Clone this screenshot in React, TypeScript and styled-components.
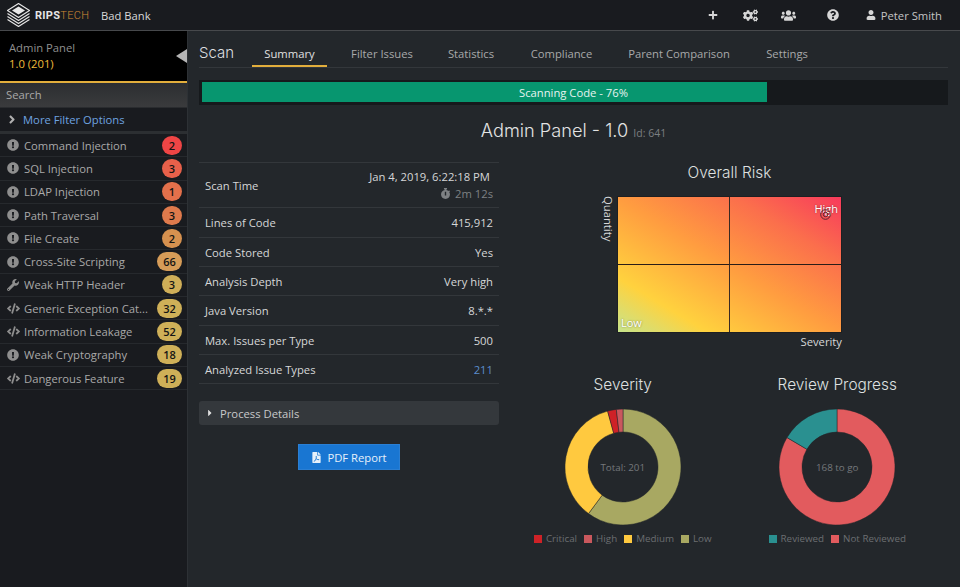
import React from "react";
import styled, { createGlobalStyle } from "styled-components";
import { FaExclamationCircle, FaWrench, FaCode, FaPlus, FaCogs, FaUsers, FaQuestionCircle, FaUser, FaStopwatch, FaFilePdf, FaCaretRight, FaAngleRight } from "react-icons/fa";

const Global = createGlobalStyle`
  html, body { margin: 0; padding: 0; background: #23272b; }
  body { width: 960px; height: 587px; overflow: hidden; font-family: "Open Sans", "Noto Sans", sans-serif; font-size: 11.25px; color: #d4d5d6; }
  * { box-sizing: border-box; }
`;

const Shell = styled.div`width: 960px; height: 587px; display: flex; flex-direction: column;`;
const Header = styled.header`
  height: 31px; flex: none; display: flex; align-items: center; background: #191b1f; border-bottom: 1px solid #47494c; padding: 0 18px 0 6px;
`;
const Brand = styled.div`display: flex; align-items: center; width: 95px; flex: none;`;
const BrandText = styled.span`font-family: "Roboto", sans-serif; font-size: 11px; font-weight: 700; color: #e6e6e6; margin-left: 4px; letter-spacing: .3px;`;
const BrandAccent = styled.span`font-weight: 300; color: #d28a35;`;
const Company = styled.span`font-size: 11.25px; color: #d8d8d8;`;
const HeaderIcons = styled.div`margin-left: auto; display: flex; align-items: center; color: #d6d6d6;`;
const HeaderBtn = styled.span<{ $mr: number }>`display: inline-flex; align-items: center; margin-right: ${p => p.$mr}px;`;
const UserName = styled.span`font-size: 11.25px; color: #c4c4c4; margin-left: 5px;`;

const Body = styled.div`flex: 1; display: flex; min-height: 0;`;
const Sidebar = styled.aside`width: 188px; flex: none; background: #191b1f; border-right: 1px solid #2d3135; display: flex; flex-direction: column;`;
const ProjectBox = styled.div`height: 52px; background: #000; border-bottom: 2px solid #e2ae3c; padding: 9px 9px 0; position: relative; line-height: 16px; flex: none;`;
const ProjectName = styled.div`color: #8f8f8f;`;
const ProjectVer = styled.div`color: #f0bb3a;`;
const Collapse = styled.span`position: absolute; right: 0; top: 18px; width: 0; height: 0; border-style: solid; border-width: 7px 11px 7px 0; border-color: transparent #b5b5b5 transparent transparent;`;
const SearchBar = styled.div`height: 25px; flex: none; background: linear-gradient(#2c2e31, #3a3b3d); padding: 0 0 2px 6px; display: flex; align-items: center; color: #a9a9a9; border-bottom: 1px solid #2a2c2f;`;
const MoreRow = styled.div`height: 26px; flex: none; display: flex; align-items: center; padding-left: 8px; gap: 7px; color: #6fa3e0; border-bottom: 3px solid #2c2f32;`;
const MoreIcon = styled.span`color: #b0b0b0; display: flex; font-size: 13px; width: 8px; justify-content: center;`;
const IssueList = styled.div`display: flex; flex-direction: column;`;
const IssueRow = styled.div`height: 23.3px; flex: none; display: flex; align-items: center; border-bottom: 1px solid #26292d; padding: 0 5px 0 7px; color: #a9a9a9;`;
const IssueIcon = styled.span`width: 17px; flex: none; display: flex; color: #8e8e8e; font-size: 12px;`;
const IssueName = styled.span`flex: 1; white-space: nowrap; overflow: hidden;`;
const Badge = styled.span<{ $c: string; $w: number }>`
  height: 19px; width: ${p => p.$w}px; border-radius: 10px; background: ${p => p.$c}; color: #141414; flex: none;
  display: flex; align-items: center; justify-content: center; font-size: 11px; font-weight: 600;
`;

const Main = styled.main`flex: 1; padding: 0 12px 0 11px; min-width: 0; background: #23272b;`;
const TabsBar = styled.nav`height: 37px; display: flex; align-items: stretch; border-bottom: 1px solid #33373b;`;
const ScanTitle = styled.div`font-family: "Inter", sans-serif; font-size: 15px; color: #dedfe0; width: 53px; padding-top: 12px; font-weight: 300;`;
const Tab = styled.div<{ $active?: boolean; $w: number }>`
  width: ${p => p.$w}px; text-align: center; padding-top: 15px; color: ${p => (p.$active ? "#e0e0e0" : "#a8a9aa")};
  border-bottom: 2px solid ${p => (p.$active ? "#e2ae3c" : "transparent")}; white-space: nowrap;
`;
const ProgressTrack = styled.div`margin-top: 12px; height: 25px; background: #16191c; padding: 2px 3px 3px; position: relative;`;
const ProgressFill = styled.div`height: 20px; background: #07966f;`;
const ProgressLabel = styled.span`position: absolute; inset: 0; display: flex; align-items: center; justify-content: center; color: #e6f3ef; padding-bottom: 1px;`;
const Title = styled.h1`margin: 15px 0 0; height: 24px; text-align: center; font-family: "Inter", sans-serif; font-weight: 300; font-size: 18.2px; line-height: 20px; color: #e2e3e3;`;
const TitleId = styled.small`font-family: "Open Sans", sans-serif; font-size: 10.5px; color: #7c7f82; font-weight: 400;`;
const Columns = styled.div`display: flex; margin-top: 14px;`;
const LeftCol = styled.div`width: 300px; flex: none; margin-top: 4px;`;
const RightCol = styled.div`flex: 1; display: flex; flex-direction: column; align-items: center; padding: 5px 0 0 13px;`;
const InfoRow = styled.div<{ $h: number }>`height: ${p => p.$h}px; display: flex; align-items: center; justify-content: space-between; padding: 0 6px; border-top: 1px solid #33373b; color: #d6d7d8;`;
const InfoLast = styled.div`border-top: 1px solid #33373b;`;
const ValueStack = styled.div`display: flex; flex-direction: column; align-items: flex-end; line-height: 17px;`;
const DateText = styled.span`margin-right: 3px;`;
const Duration = styled.div`color: #7e8184; display: flex; align-items: center; gap: 4px;`;
const LinkVal = styled.span`color: #5b8dcd;`;
const Accordion = styled.div`margin-top: 17px; height: 24px; background: #34383c; border-radius: 3px; display: flex; align-items: center; padding-left: 6px; color: #c8c9ca; gap: 5px;`;
const CaretBox = styled.span`display: flex; font-size: 10px; color: #e0e0e0;`;
const ButtonRow = styled.div`display: flex; justify-content: center; margin-top: 19px;`;
const PdfButton = styled.button`width: 102px; height: 26px; border: 1px solid #2a7fd4; background: #1976d2; color: #e6f0fa; font-family: inherit; font-size: 11.25px; display: flex; align-items: center; justify-content: center; gap: 5px; padding: 0;`;

const ChartTitle = styled.h2`margin: 0; font-family: "Inter", sans-serif; font-weight: 300; font-size: 15.4px; line-height: 20px; color: #dfe0e0; text-align: center;`;
const RiskWrap = styled.div`display: flex; flex-direction: column; align-items: center; margin: 0 1px 25px 0;`;
const RiskRow = styled.div`display: flex; margin-top: 13px; position: relative;`;
const RiskMap = styled.div`
  width: 225px; height: 137px; position: relative; border: 1px solid #1d1f22;
  background: linear-gradient(to top right, #c6e48c 0%, #ffd23e 20%, #ff9c40 50%, #fb6f4c 76%, #f83a5c 100%);
  display: grid; grid-template-columns: 1fr 1fr; grid-template-rows: 1fr 1fr;
`;
const Quad = styled.div<{ $r?: boolean; $b?: boolean }>`
  border-right: ${p => (p.$r ? "1px solid #3a2a22" : "none")}; border-bottom: ${p => (p.$b ? "1px solid #2a1d18" : "none")};
`;
const QuantityLabel = styled.span`position: absolute; left: -16px; top: 0; writing-mode: vertical-rl; color: #d6d7d8; line-height: 14px;`;
const MapLabel = styled.span<{ $high?: boolean }>`position: absolute; font-size: 11px; color: #fff; text-shadow: 0 0 2px rgba(0,0,0,.45); ${p => (p.$high ? "right: 3px; top: 4px;" : "left: 3px; bottom: 2px;")}`;
const Target = styled.svg`position: absolute; right: 10px; top: 12px;`;
const SeverityLabel = styled.div`font-size: 11.25px; color: #d6d7d8; line-height: 16px; margin-top: 1px; width: 225px; text-align: right;`;
const DonutRow = styled.div`display: flex; width: 429px; justify-content: space-between;`;
const DonutCard = styled.div`width: 214.5px; display: flex; flex-direction: column; align-items: center;`;
const DonutBox = styled.div`width: 118px; height: 118px; position: relative; margin-top: 13px;`;
const DonutLabel = styled.div`position: absolute; inset: 0; display: flex; align-items: center; justify-content: center; font-size: 9.8px; color: #75787b;`;
const Legend = styled.div`display: flex; gap: 7px; margin-top: 6px; font-size: 9.8px; color: #6b6e71; line-height: 14px;`;
const LegendItem = styled.span`display: flex; align-items: center; gap: 4px;`;
const Swatch = styled.i<{ $c: string }>`display: block; width: 8px; height: 8px; background: ${p => p.$c};`;

const issues: [string, string, number, string, "warn" | "wrench" | "code"][] = [
  ["Command Injection", "2", 20, "#ef4545", "warn"],
  ["SQL Injection", "3", 20, "#e8604a", "warn"],
  ["LDAP Injection", "1", 20, "#e3704b", "warn"],
  ["Path Traversal", "3", 20, "#df7a4c", "warn"],
  ["File Create", "2", 20, "#d6914f", "warn"],
  ["Cross-Site Scripting", "66", 25, "#d69c58", "warn"],
  ["Weak HTTP Header", "3", 20, "#cfae58", "wrench"],
  ["Generic Exception Cat...", "32", 25, "#cfb058", "code"],
  ["Information Leakage", "52", 25, "#cfb058", "code"],
  ["Weak Cryptography", "18", 25, "#cfb058", "warn"],
  ["Dangerous Feature", "19", 25, "#cfb058", "code"],
];

const Logo = () => (
  <svg width="25" height="26" viewBox="0 0 25 26" fill="none" stroke="#e8e8e8" strokeWidth="1.1" strokeLinejoin="round">
    <path d="M12.5 1.5 23.5 8.5 12.5 15.5 1.5 8.5Z" />
    <path d="M12.5 4.5 19 8.5 12.5 12.5 6 8.5Z" fill="#e8e8e8" stroke="none" />
    <path d="M1.5 11.5 12.5 18.5 23.5 11.5" />
    <path d="M1.5 14.5 12.5 21.5 23.5 14.5" />
    <path d="M1.5 17.5 12.5 24.5 23.5 17.5" />
  </svg>
);

const polar = (cx: number, cy: number, r: number, deg: number) => {
  const a = ((deg - 90) * Math.PI) / 180;
  return [cx + r * Math.cos(a), cy + r * Math.sin(a)];
};
const arc = (from: number, to: number) => {
  const R = 58, r = 35, c = 59;
  const [x1, y1] = polar(c, c, R, from), [x2, y2] = polar(c, c, R, to), [x3, y3] = polar(c, c, r, to), [x4, y4] = polar(c, c, r, from);
  const large = to - from > 180 ? 1 : 0;
  return `M${x1} ${y1}A${R} ${R} 0 ${large} 1 ${x2} ${y2}L${x3} ${y3}A${r} ${r} 0 ${large} 0 ${x4} ${y4}Z`;
};
const Donut = ({ segs, label }: { segs: [number, number, string][]; label: string }) => (
  <DonutBox>
    <svg width="118" height="118" viewBox="0 0 118 118">
      {segs.map(([a, b, c]) => <path key={a} d={arc(a, b)} fill={c} stroke="#23272b" strokeWidth=".5" />)}
    </svg>
    <DonutLabel>{label}</DonutLabel>
  </DonutBox>
);

const rows: [string, string, number][] = [
  ["Lines of Code", "415,912", 30],
  ["Code Stored", "Yes", 29],
  ["Analysis Depth", "Very high", 29],
  ["Java Version", "8.*.*", 30],
  ["Max. Issues per Type", "500", 29],
];
const tabs: [string, number][] = [["Filter Issues", 110], ["Statistics", 68], ["Compliance", 113], ["Parent Comparison", 122], ["Settings", 94]];

export default function App() {
  return (
    <Shell>
      <Global />
      <Header>
        <Brand><Logo /><BrandText>RIPS<BrandAccent>TECH</BrandAccent></BrandText></Brand>
        <Company>Bad Bank</Company>
        <HeaderIcons>
          <HeaderBtn $mr={25}><FaPlus size={10} /></HeaderBtn>
          <HeaderBtn $mr={23}><FaCogs size={15} /></HeaderBtn>
          <HeaderBtn $mr={31}><FaUsers size={15} /></HeaderBtn>
          <HeaderBtn $mr={27}><FaQuestionCircle size={12} /></HeaderBtn>
          <HeaderBtn $mr={0}><FaUser size={10} /><UserName>Peter Smith</UserName></HeaderBtn>
        </HeaderIcons>
      </Header>
      <Body>
        <Sidebar>
          <ProjectBox>
            <ProjectName>Admin Panel</ProjectName>
            <ProjectVer>1.0 (201)</ProjectVer>
            <Collapse />
          </ProjectBox>
          <SearchBar>Search</SearchBar>
          <MoreRow><MoreIcon><FaAngleRight /></MoreIcon>More Filter Options</MoreRow>
          <IssueList>
            {issues.map(([name, n, w, c, ic]) => (
              <IssueRow key={name}>
                <IssueIcon>{ic === "warn" ? <FaExclamationCircle /> : ic === "wrench" ? <FaWrench /> : <FaCode size={13} />}</IssueIcon>
                <IssueName>{name}</IssueName>
                <Badge $c={c} $w={w}>{n}</Badge>
              </IssueRow>
            ))}
          </IssueList>
        </Sidebar>
        <Main>
          <TabsBar>
            <ScanTitle>Scan</ScanTitle>
            <Tab $active $w={75}>Summary</Tab>
            {tabs.map(([t, w]) => <Tab key={t} $w={w}>{t}</Tab>)}
          </TabsBar>
          <ProgressTrack>
            <ProgressFill style={{ width: "76%" }} />
            <ProgressLabel>Scanning Code - 76%</ProgressLabel>
          </ProgressTrack>
          <Title>Admin Panel - 1.0 <TitleId>Id: 641</TitleId></Title>
          <Columns>
            <LeftCol>
              <InfoRow $h={45}>
                <span>Scan Time</span>
                <ValueStack><DateText>Jan 4, 2019, 6:22:18 PM</DateText><Duration><FaStopwatch size={11} /> 2m 12s</Duration></ValueStack>
              </InfoRow>
              {rows.map(([k, v, h]) => <InfoRow key={k} $h={h}><span>{k}</span><span>{v}</span></InfoRow>)}
              <InfoRow $h={29}><span>Analyzed Issue Types</span><LinkVal>211</LinkVal></InfoRow>
              <InfoLast />
              <Accordion><CaretBox><FaCaretRight /></CaretBox>Process Details</Accordion>
              <ButtonRow><PdfButton><FaFilePdf size={11} />PDF Report</PdfButton></ButtonRow>
            </LeftCol>
            <RightCol>
              <RiskWrap>
                <ChartTitle>Overall Risk</ChartTitle>
                <RiskRow>
                  <QuantityLabel>Quantity</QuantityLabel>
                  <RiskMap>
                    <Quad $r $b /><Quad $b /><Quad $r /><Quad />
                    <MapLabel $high>High</MapLabel>
                    <MapLabel>Low</MapLabel>
                    <Target width="11" height="11" viewBox="0 0 11 11" fill="none" stroke="#5a2530"><circle cx="5.5" cy="5.5" r="4.8" /><circle cx="5.5" cy="5.5" r="2.2" /></Target>
                  </RiskMap>
                </RiskRow>
                <SeverityLabel>Severity</SeverityLabel>
              </RiskWrap>
              <DonutRow>
                <DonutCard>
                  <ChartTitle>Severity</ChartTitle>
                  <Donut label="Total: 201" segs={[[0, 216.5, "#a8a862"], [216.5, 344.6, "#ffc93f"], [344.6, 353.4, "#ce2227"], [353.4, 360, "#c9585d"]]} />
                  <Legend>
                    <LegendItem><Swatch $c="#ce2227" />Critical</LegendItem>
                    <LegendItem><Swatch $c="#c9585d" />High</LegendItem>
                    <LegendItem><Swatch $c="#ffc93f" />Medium</LegendItem>
                    <LegendItem><Swatch $c="#a8a862" />Low</LegendItem>
                  </Legend>
                </DonutCard>
                <DonutCard>
                  <ChartTitle>Review Progress</ChartTitle>
                  <Donut label="168 to go" segs={[[0, 300.5, "#e25b5e"], [300.5, 360, "#2a9090"]]} />
                  <Legend>
                    <LegendItem><Swatch $c="#2a9090" />Reviewed</LegendItem>
                    <LegendItem><Swatch $c="#e25b5e" />Not Reviewed</LegendItem>
                  </Legend>
                </DonutCard>
              </DonutRow>
            </RightCol>
          </Columns>
        </Main>
      </Body>
    </Shell>
  );
}
